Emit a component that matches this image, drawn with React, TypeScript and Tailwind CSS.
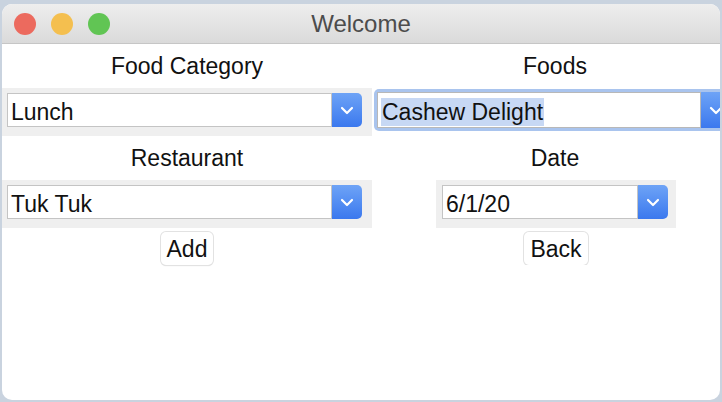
import React from "react";

function Chevron() {
  return (
    <svg width="14" height="9" viewBox="0 0 14 9" fill="none">
      <path d="M2 2l5 5 5-5" stroke="white" strokeWidth="2.2" strokeLinecap="round" strokeLinejoin="round" />
    </svg>
  );
}

function Combo({ value, focused = false }: { value: string; focused?: boolean }) {
  if (focused) {
    return (
      <div className="ml-[2px] mt-[1px] flex h-[42px] w-[360px] rounded-[5px] bg-[#a9c4ee] p-[3px]">
        <div className="flex flex-1 items-center border border-[#b8b8b8] bg-white pl-[3px] pt-[4px]">
          <span className="bg-[#c7d8f4] px-[1px] leading-[28px] text-[#111]">{value}</span>
        </div>
        <div className="flex w-[30px] items-center justify-center bg-gradient-to-b from-[#6ea3f6] to-[#3b78ee]">
          <Chevron />
        </div>
      </div>
    );
  }
  return (
    <div className="flex h-[34px] w-full">
      <div className="flex flex-1 items-center border border-[#c4c4c4] bg-white pl-[3px] pt-[5px] text-[#111]">{value}</div>
      <div className="flex w-[30px] items-center justify-center rounded-r-[5px] bg-gradient-to-b from-[#6ea3f6] to-[#3b78ee]">
        <Chevron />
      </div>
    </div>
  );
}

function Btn({ label }: { label: string }) {
  return (
    <button className="h-[33px] rounded-[5px] bg-white px-[6px] text-[#111] shadow-[0_0_0_1px_#e2e2e2,0_1px_1px_rgba(0,0,0,0.18)]">
      {label}
    </button>
  );
}

export default function App() {
  return (
    <div className="h-[402px] w-[722px] overflow-hidden bg-[#c9d3df] pl-[2px] pr-[2px] pt-[4px] font-['Liberation_Sans',Arial,sans-serif] text-[23px]">
      <div className="flex h-[396px] flex-col overflow-hidden rounded-[10px] bg-white">
        <div className="flex h-[40px] items-center border-b border-[#c6c6c6] bg-gradient-to-b from-[#eeeeee] to-[#dadada]">
          <div className="flex gap-[15px] pl-[12px]">
            <span className="h-[22px] w-[22px] rounded-full bg-[#ec6a5e]" />
            <span className="h-[22px] w-[22px] rounded-full bg-[#f4bf4f]" />
            <span className="h-[22px] w-[22px] rounded-full bg-[#61c554]" />
          </div>
          <div className="flex-1 pr-[108px] text-center text-[24px] text-[#4c4c4c]">Welcome</div>
        </div>

        <div className="grid grid-cols-[370px_1fr]">
          <div className="flex flex-col">
            <div className="flex h-[44px] items-center justify-center text-[#111]">Food Category</div>
            <div className="h-[48px] bg-[#efefef] pl-[5px] pr-[10px] pt-[5px]">
              <Combo value="Lunch" />
            </div>
            <div className="flex h-[44px] items-center justify-center text-[#111]">Restaurant</div>
            <div className="h-[48px] bg-[#efefef] pl-[5px] pr-[10px] pt-[5px]">
              <Combo value="Tuk Tuk" />
            </div>
            <div className="flex justify-center pt-[4px]">
              <Btn label="Add" />
            </div>
          </div>

          <div className="flex flex-col overflow-hidden">
            <div className="flex h-[44px] items-center justify-center pl-[18px] text-[#111]">Foods</div>
            <div className="h-[48px]">
              <Combo value="Cashew Delight" focused />
            </div>
            <div className="flex h-[44px] items-center justify-center pl-[18px] text-[#111]">Date</div>
            <div className="flex h-[48px] justify-center pl-[20px]">
              <div className="w-[240px] bg-[#efefef] pl-[6px] pr-[8px] pt-[5px]">
                <Combo value="6/1/20" />
              </div>
            </div>
            <div className="flex justify-center pl-[20px] pt-[4px]">
              <Btn label="Back" />
            </div>
          </div>
        </div>
      </div>
    </div>
  );
}
